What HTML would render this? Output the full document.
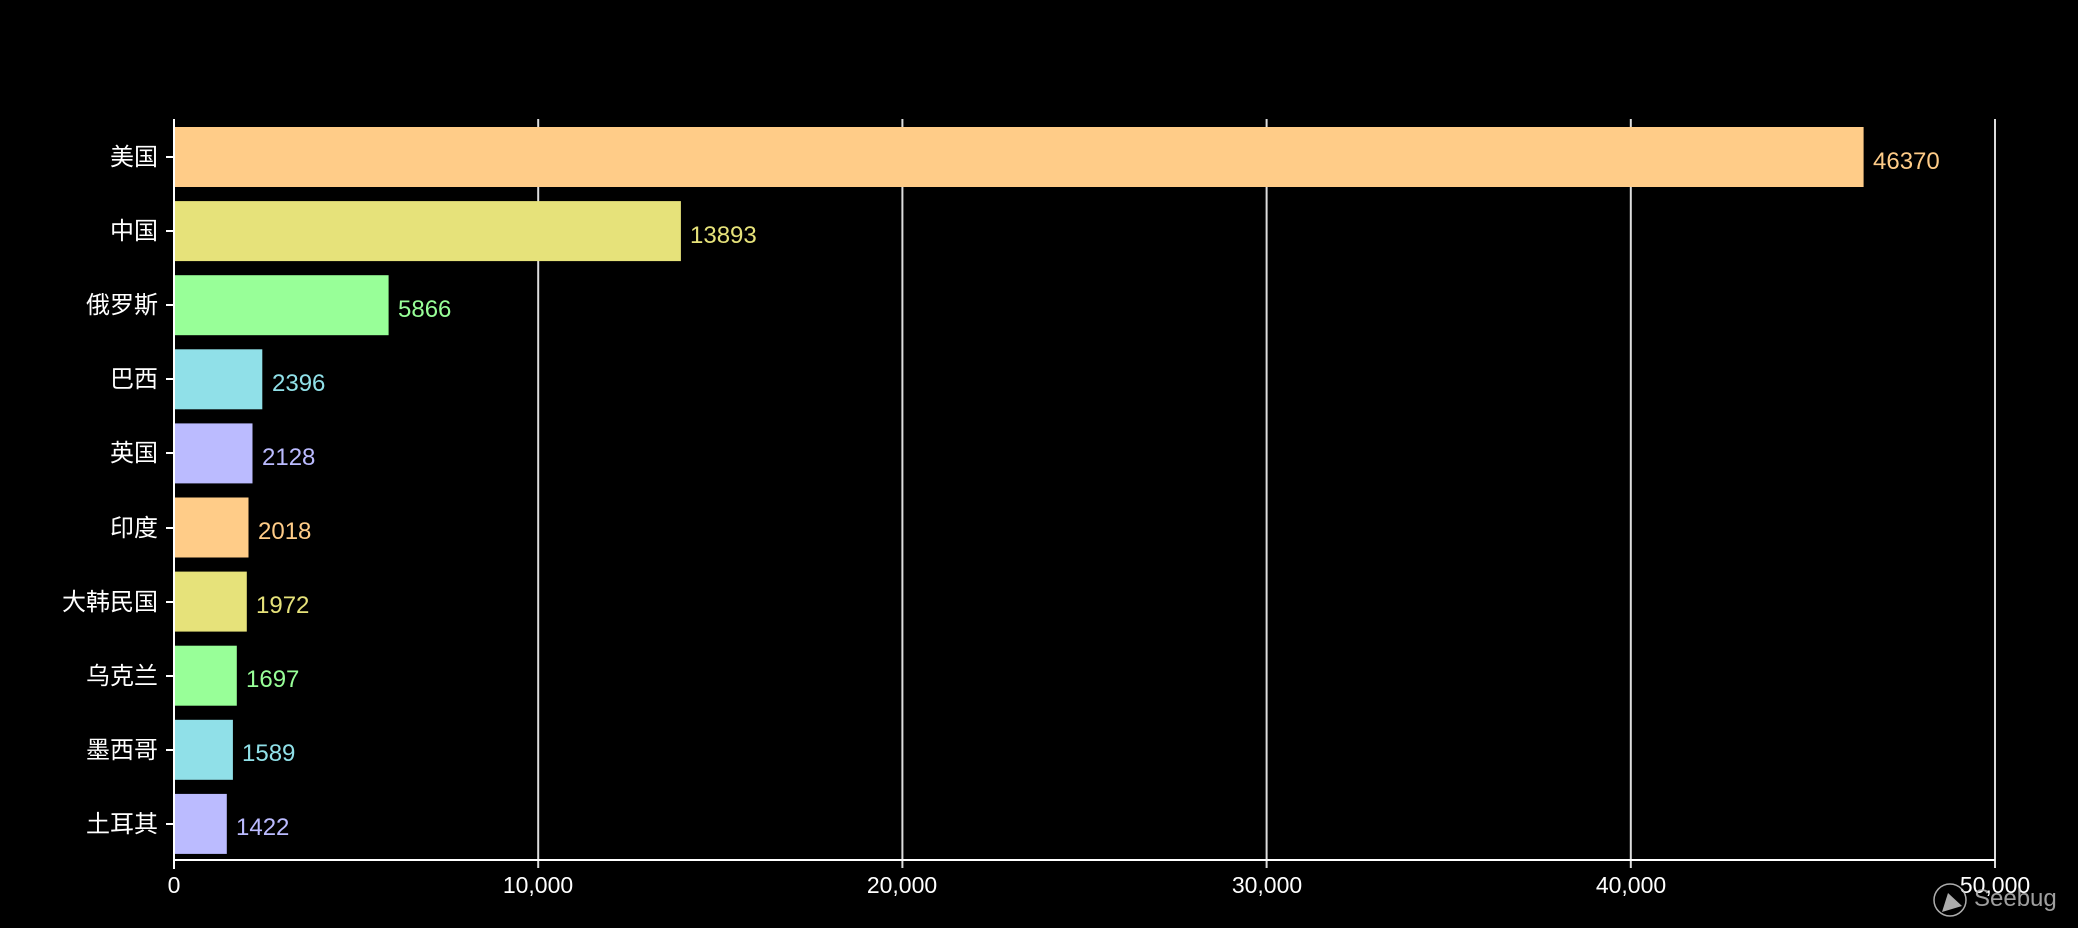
<!DOCTYPE html>
<html><head><meta charset="utf-8"><style>
html,body{margin:0;padding:0;background:#000;width:2078px;height:928px;overflow:hidden}
text{font-family:"Liberation Sans","Noto Sans CJK SC",sans-serif}
</style></head><body>
<svg width="2078" height="928" viewBox="0 0 2078 928" xmlns="http://www.w3.org/2000/svg">
<rect width="2078" height="928" fill="#000"/>
<g stroke="#ddd" stroke-width="2">
<line x1="538.2" y1="119" x2="538.2" y2="868"/>
<line x1="902.4" y1="119" x2="902.4" y2="868"/>
<line x1="1266.6" y1="119" x2="1266.6" y2="868"/>
<line x1="1630.8" y1="119" x2="1630.8" y2="868"/>
<line x1="1995" y1="119" x2="1995" y2="868"/>
</g>
<g id="bars">
<rect x="175" y="127" width="1688.6" height="60" fill="#ffcc88"/>
<rect x="175" y="201.1" width="505.9" height="60" fill="#e6e27a"/>
<rect x="175" y="275.2" width="213.6" height="60" fill="#98ff98"/>
<rect x="175" y="349.3" width="87.3" height="60" fill="#90e0e8"/>
<rect x="175" y="423.4" width="77.5" height="60" fill="#bbbbff"/>
<rect x="175" y="497.5" width="73.5" height="60" fill="#ffcc88"/>
<rect x="175" y="571.6" width="71.8" height="60" fill="#e6e27a"/>
<rect x="175" y="645.7" width="61.8" height="60" fill="#98ff98"/>
<rect x="175" y="719.8" width="57.9" height="60" fill="#90e0e8"/>
<rect x="175" y="793.9" width="51.8" height="60" fill="#bbbbff"/>
</g>
<g font-size="24">
<text x="1873" y="169" fill="#ffcc88">46370</text>
<text x="690" y="243" fill="#e6e27a">13893</text>
<text x="398" y="317" fill="#98ff98">5866</text>
<text x="272" y="391" fill="#90e0e8">2396</text>
<text x="262" y="465" fill="#bbbbff">2128</text>
<text x="258" y="539" fill="#ffcc88">2018</text>
<text x="256" y="613" fill="#e6e27a">1972</text>
<text x="246" y="687" fill="#98ff98">1697</text>
<text x="242" y="761" fill="#90e0e8">1589</text>
<text x="236" y="835" fill="#bbbbff">1422</text>
</g>
<g stroke="#fff" stroke-width="2">
<line x1="174" y1="119" x2="174" y2="869"/>
<line x1="174" y1="860" x2="1995" y2="860"/>
<line x1="166" y1="157" x2="174" y2="157"/>
<line x1="166" y1="231" x2="174" y2="231"/>
<line x1="166" y1="305" x2="174" y2="305"/>
<line x1="166" y1="379" x2="174" y2="379"/>
<line x1="166" y1="453" x2="174" y2="453"/>
<line x1="166" y1="528" x2="174" y2="528"/>
<line x1="166" y1="602" x2="174" y2="602"/>
<line x1="166" y1="676" x2="174" y2="676"/>
<line x1="166" y1="750" x2="174" y2="750"/>
<line x1="166" y1="824" x2="174" y2="824"/>
</g>
<g font-size="24" fill="#fff" text-anchor="end">
<text x="158" y="165">美国</text>
<text x="158" y="239">中国</text>
<text x="158" y="313">俄罗斯</text>
<text x="158" y="387">巴西</text>
<text x="158" y="461">英国</text>
<text x="158" y="536">印度</text>
<text x="158" y="610">大韩民国</text>
<text x="158" y="684">乌克兰</text>
<text x="158" y="758">墨西哥</text>
<text x="158" y="832">土耳其</text>
</g>
<g font-size="23" fill="#fff" text-anchor="middle">
<text x="174" y="893">0</text>
<text x="538" y="893">10,000</text>
<text x="902" y="893">20,000</text>
<text x="1267" y="893">30,000</text>
<text x="1631" y="893">40,000</text>
<text x="1995" y="893">50,000</text>
</g>
<g opacity="0.85">
<circle cx="1950" cy="900" r="16" fill="none" stroke="#ccc" stroke-width="1.5"/>
<path d="M1942 912 L1948 893 L1962 906 Z" fill="#ccc"/>
<text x="1974" y="906" font-size="24" fill="#bbb">Seebug</text>
</g>
</svg>
</body></html>
